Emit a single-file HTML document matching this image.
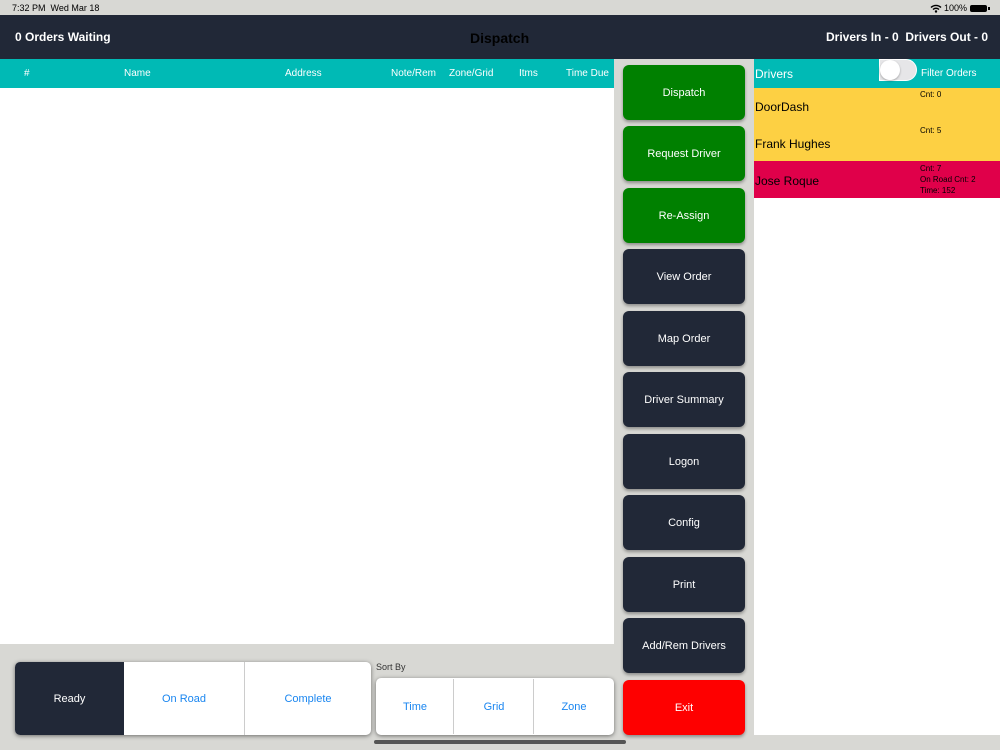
<!DOCTYPE html>
<html><head><style>
*{margin:0;padding:0;box-sizing:border-box}
body{width:1000px;height:750px;background:#d8d8d4;font-family:"Liberation Sans",sans-serif;position:relative;overflow:hidden}
.a{position:absolute}
.btn{position:absolute;left:623px;width:122px;height:55px;border-radius:6px;color:#fff;font-size:11px;display:flex;align-items:center;justify-content:center;box-shadow:0 2px 3px rgba(0,0,0,.35);background:#212837}
.g{background:#008000}
.th{position:absolute;top:68px;font-size:10px;color:#fff}
.seg{position:absolute;display:flex;align-items:center;justify-content:center;font-size:11px;color:#1a86f0;background:#fff}
</style></head><body>
<div class="a" style="left:12px;top:3px;font-size:9px;color:#000">7:32 PM&nbsp;&nbsp;Wed Mar 18</div>
<div class="a" style="left:944px;top:3px;font-size:9px;color:#000">100%</div>
<svg class="a" style="left:930px;top:4px" width="12" height="9" viewBox="0 0 12 9"><path d="M1 3.5A7 7 0 0 1 11 3.5M3 5.5A4.2 4.2 0 0 1 9 5.5" stroke="#000" stroke-width="1.4" fill="none"/><circle cx="6" cy="7.5" r="1.2"/></svg>
<div class="a" style="left:970px;top:5px;width:17px;height:7px;background:#000;border-radius:2px"></div>
<div class="a" style="left:988px;top:7px;width:1.5px;height:3px;background:#000"></div>
<div class="a" style="left:0;top:15px;width:1000px;height:44px;background:#212837"></div>
<div class="a" style="left:15px;top:30px;font-size:12px;font-weight:bold;color:#fff">0 Orders Waiting</div>
<div class="a" style="left:470px;top:30px;font-size:14px;font-weight:bold;color:#000">Dispatch</div>
<div class="a" style="left:826px;top:30px;font-size:12px;font-weight:bold;color:#fff">Drivers In - 0&nbsp; Drivers Out - 0</div>
<div class="a" style="left:0;top:59px;width:614px;height:29px;background:#00bab5"></div>
<div class="th" style="left:24px">#</div>
<div class="th" style="left:124px">Name</div>
<div class="th" style="left:285px">Address</div>
<div class="th" style="left:391px">Note/Rem</div>
<div class="th" style="left:449px">Zone/Grid</div>
<div class="th" style="left:519px">Itms</div>
<div class="th" style="left:566px">Time Due</div>
<div class="a" style="left:0;top:88px;width:614px;height:556px;background:#fff"></div>
<div class="btn g" style="top:65px">Dispatch</div>
<div class="btn g" style="top:126px">Request Driver</div>
<div class="btn g" style="top:188px">Re-Assign</div>
<div class="btn" style="top:249px">View Order</div>
<div class="btn" style="top:311px">Map Order</div>
<div class="btn" style="top:372px">Driver Summary</div>
<div class="btn" style="top:434px">Logon</div>
<div class="btn" style="top:495px">Config</div>
<div class="btn" style="top:557px">Print</div>
<div class="btn" style="top:618px">Add/Rem Drivers</div>
<div class="btn" style="top:680px;background:#fe0000">Exit</div>
<div class="a" style="left:754px;top:59px;width:246px;height:29px;background:#00bab5"></div>
<div class="a" style="left:755px;top:67px;font-size:12px;color:#fff">Drivers</div>
<div class="a" style="left:879px;top:59px;width:38px;height:22px;background:#e6e6e8;border:1px solid #fff;border-radius:0 11px 11px 0"></div>
<div class="a" style="left:880px;top:60px;width:20px;height:20px;background:#fff;border-radius:50%;box-shadow:0 1px 2px rgba(0,0,0,.3)"></div>
<div class="a" style="left:921px;top:68px;font-size:10px;color:#fff">Filter Orders</div>
<div class="a" style="left:754px;top:88px;width:246px;height:647px;background:#fff"></div>
<div class="a" style="left:754px;top:88px;width:246px;height:73px;background:#fdd043"></div>
<div class="a" style="left:754px;top:161px;width:246px;height:37px;background:#e0004a"></div>
<div class="a" style="left:755px;top:100px;font-size:12px">DoorDash</div>
<div class="a" style="left:755px;top:137px;font-size:12px">Frank Hughes</div>
<div class="a" style="left:755px;top:174px;font-size:12px">Jose Roque</div>
<div class="a" style="left:920px;top:90px;font-size:8px">Cnt: 0</div>
<div class="a" style="left:920px;top:126px;font-size:8px">Cnt: 5</div>
<div class="a" style="left:920px;top:163px;font-size:8px;line-height:11px">Cnt: 7<br>On Road Cnt: 2<br>Time: 152</div>
<div class="a" style="left:15px;top:662px;width:356px;height:73px;border-radius:5px;overflow:hidden;box-shadow:0 1px 4px rgba(0,0,0,.5);background:#fff"></div>
<div class="seg" style="left:15px;top:662px;width:109px;height:73px;background:#212837;color:#fff;border-radius:5px 0 0 5px">Ready</div>
<div class="seg" style="left:124px;top:662px;width:121px;height:73px;border-right:1px solid #ccc">On Road</div>
<div class="seg" style="left:246px;top:662px;width:124px;height:73px;border-radius:0 5px 5px 0">Complete</div>
<div class="a" style="left:376px;top:662px;font-size:9px;color:#333">Sort By</div>
<div class="a" style="left:376px;top:678px;width:238px;height:57px;border-radius:5px;background:#fff;box-shadow:0 1px 4px rgba(0,0,0,.5)"></div>
<div class="seg" style="left:377px;top:679px;width:77px;height:55px;border-right:1px solid #ccc;border-radius:5px 0 0 5px">Time</div>
<div class="seg" style="left:455px;top:679px;width:79px;height:55px;border-right:1px solid #ccc">Grid</div>
<div class="seg" style="left:535px;top:679px;width:78px;height:55px;border-radius:0 5px 5px 0">Zone</div>
<div class="a" style="left:374px;top:740px;width:252px;height:4px;border-radius:2px;background:#555"></div>
</body></html>
